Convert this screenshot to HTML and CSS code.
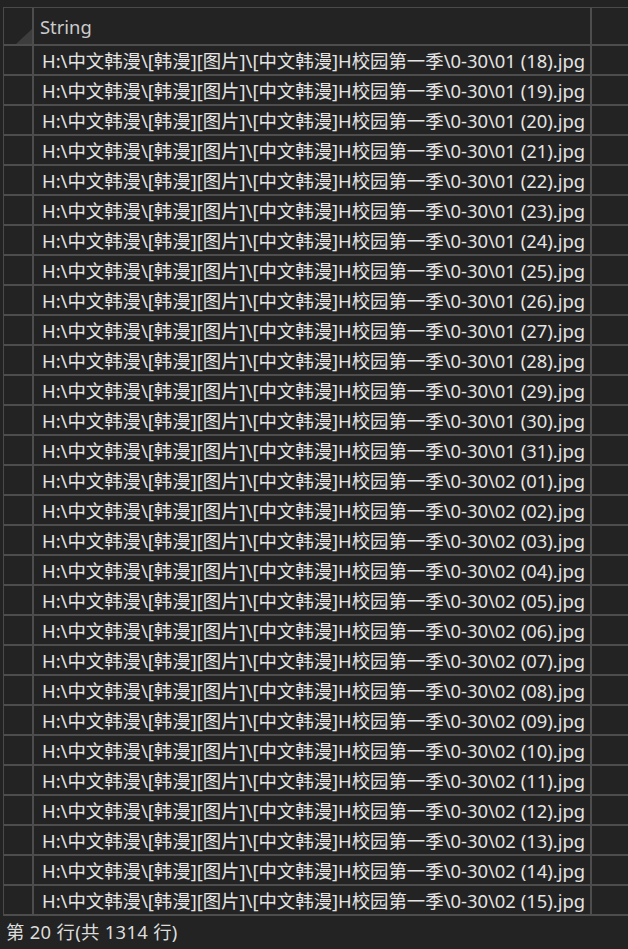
FILE: index.html
```html
<!DOCTYPE html>
<html>

<head>
    <title>String</title>
    <link rel="stylesheet" href="styles.css">
</head>

<body>
    <div class="grid">
        <div class="row header">
            <div class="corner">
                <svg width="16" height="15" viewBox="0 0 16 15"><polygon points="16,0 16,15 0,15" fill="#3d3d3d"/></svg>
            </div>
            <div class="cell">String</div>
            <div class="filler"></div>
        </div>
        <div id="rows"></div>
    </div>
    <div class="status">第 20 行(共 1314 行)</div>

    <script>
        let rows = document.getElementById("rows");
        let names = [];
        for (let i = 18; i <= 31; i++) names.push("01 (" + i + ")");
        for (let i = 1; i <= 15; i++) names.push("02 (" + String(i).padStart(2, "0") + ")");

        names.forEach(name => {
            let row = document.createElement("div");
            row.classList.add("row");
            let head = document.createElement("div");
            head.classList.add("corner");
            let cell = document.createElement("div");
            cell.classList.add("cell");
            cell.append(document.createTextNode("H:\\中文韩漫\\[韩漫][图片]\\[中文韩漫]H校园第一季\\0-30\\" + name + ".jpg"));
            let filler = document.createElement("div");
            filler.classList.add("filler");
            row.append(head, cell, filler);
            rows.append(row);
        });
    </script>
</body>

</html>
```
FILE: styles.css
```css
* {
    margin: 0;
    padding: 0;
    box-sizing: border-box;
}

body {
    background-color: #232323;
    color: #e4e4e4;
    font: 18.4px "Noto Sans", "Noto Sans CJK SC", sans-serif;
    width: 628px;
    height: 949px;
    overflow: hidden;
}

.grid {
    margin-top: 7px;
    margin-left: 3px;
    border-top: 1px solid #4a4a4a;
    border-left: 1px solid #4a4a4a;
}

.row {
    display: grid;
    grid-template-columns: 30px 558px 1fr;
    height: 30px;
    border-bottom: 2px solid #4d4d4d;
}

.row.header {
    height: 38px;
}

.corner {
    border-right: 2px solid #4d4d4d;
    display: flex;
    justify-content: flex-end;
    align-items: flex-end;
}

.cell {
    border-right: 2px solid #4d4d4d;
    padding-left: 8px;
    line-height: 29px;
    white-space: nowrap;
    overflow: hidden;
}

.header .cell {
    line-height: 37px;
    padding-left: 6px;
    color: #cccccc;
}

.status {
    padding: 3px 0 0 6px;
    line-height: 26px;
    color: #dcdcdc;
    letter-spacing: 0.3px;
}
```
